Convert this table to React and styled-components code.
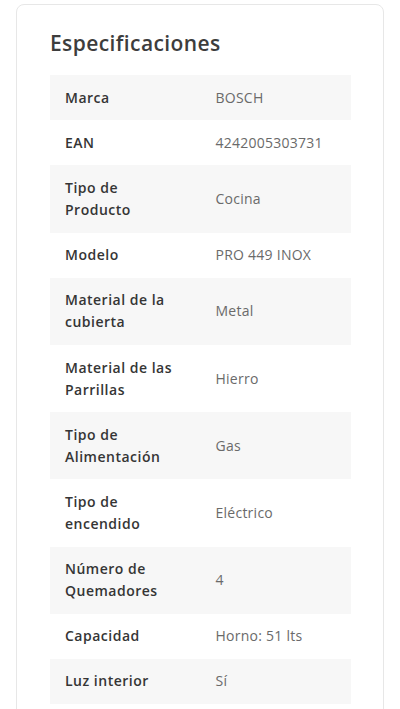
import React from 'react';
import styled, { createGlobalStyle } from 'styled-components';

const GlobalStyle = createGlobalStyle`
  body {
    margin: 0;
    background: #fff;
    font-family: 'Open Sans', 'Noto Sans', Arial, sans-serif;
  }
`;

const Card = styled.section`
  margin: 4px 16px 0;
  padding: 23px 32px 40px 33px;
  border: 1px solid #e7e7e7;
  border-radius: 8px;
  min-height: 820px;
  box-sizing: border-box;
`;

const Title = styled.h2`
  margin: 0 0 17px;
  font-size: 21px;
  line-height: 30px;
  font-weight: 600;
  color: #3d3d3d;
  letter-spacing: 0.4px;
`;

const SpecTable = styled.table`
  width: 100%;
  border-collapse: collapse;
  table-layout: fixed;
  font-size: 14px;
  line-height: 22px;
`;

const Row = styled.tr`
  background: ${(p) => (p.$striped ? '#f7f7f7' : '#fff')};
`;

const Label = styled.th`
  box-sizing: border-box;
  width: 50%;
  padding: 11.6px 15px;
  text-align: left;
  vertical-align: middle;
  font-weight: 600;
  color: #353535;
  letter-spacing: 0.5px;
`;

const Value = styled.td`
  box-sizing: border-box;
  padding: 11.6px 15px;
  vertical-align: middle;
  font-weight: 400;
  color: #6a6a6a;
  letter-spacing: 0.25px;
`;

const specs = [
  ['Marca', 'BOSCH'],
  ['EAN', '4242005303731'],
  ['Tipo de Producto', 'Cocina'],
  ['Modelo', 'PRO 449 INOX'],
  ['Material de la cubierta', 'Metal'],
  ['Material de las Parrillas', 'Hierro'],
  ['Tipo de Alimentación', 'Gas'],
  ['Tipo de encendido', 'Eléctrico'],
  ['Número de Quemadores', '4'],
  ['Capacidad', 'Horno: 51 lts'],
  ['Luz interior', 'Sí'],
];

export default function App() {
  return (
    <>
      <GlobalStyle />
      <Card>
        <Title>Especificaciones</Title>
        <SpecTable>
          <tbody>
            {specs.map(([label, value], i) => (
              <Row key={label} $striped={i % 2 === 0}>
                <Label>{label}</Label>
                <Value>{value}</Value>
              </Row>
            ))}
          </tbody>
        </SpecTable>
      </Card>
    </>
  );
}
